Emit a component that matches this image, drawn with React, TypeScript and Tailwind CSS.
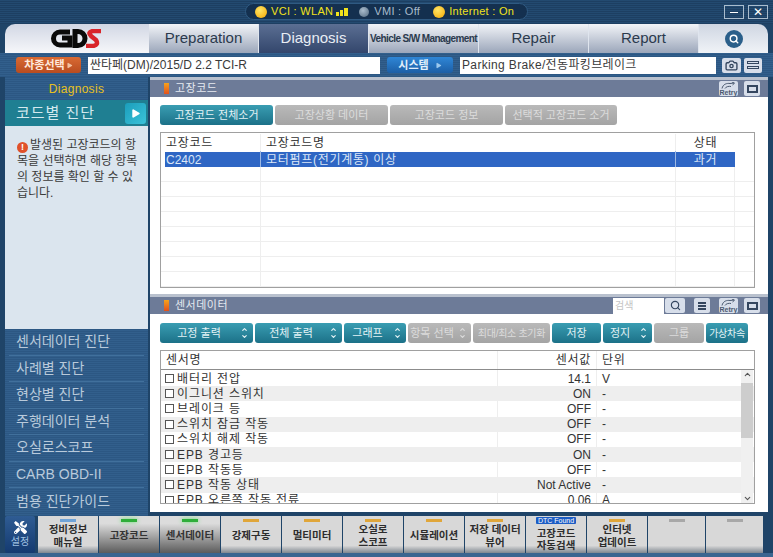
import { Camera, ChevronDown, ChevronUp, Play, Search } from "lucide-react";
import { FaTools } from "react-icons/fa";

const font = "font-['Liberation_Sans','Noto_Sans_CJK_KR',sans-serif]";

const stripes =
  "bg-[repeating-linear-gradient(0deg,#2c5783_0px,#2c5783_1px,#325f8c_1px,#325f8c_2px)]";

const sideItems = [
  "센서데이터 진단",
  "사례별 진단",
  "현상별 진단",
  "주행데이터 분석",
  "오실로스코프",
  "CARB OBD-II",
  "범용 진단가이드",
];

const sensors = [
  ["배터리 전압", "14.1", "V"],
  ["이그니션 스위치", "ON", "-"],
  ["브레이크 등", "OFF", "-"],
  ["스위치 잠금 작동", "OFF", "-"],
  ["스위치 해제 작동", "OFF", "-"],
  ["EPB 경고등", "ON", "-"],
  ["EPB 작동등", "OFF", "-"],
  ["EPB 작동 상태", "Not Active", "-"],
  ["EPB 오른쪽 작동 전류", "0.06", "A"],
];

const tools = [
  { top: ["정비정보", "매뉴얼"], led: "blue" },
  { top: ["고장코드"], led: "green" },
  { top: ["센서데이터"], led: "green" },
  { top: ["강제구동"], led: "amber" },
  { top: ["멀티미터"], led: "amber" },
  { top: ["오실로", "스코프"], led: "amber" },
  { top: ["시뮬레이션"], led: "amber" },
  { top: ["저장 데이터", "뷰어"], led: "amber" },
  { top: ["고장코드", "자동검색"], led: "dtc" },
  { top: ["인터넷", "업데이트"], led: "amber" },
  { top: [], led: "off" },
  { top: [], led: "off" },
];

function Lamp({ on }: { on: boolean }) {
  return (
    <span
      className={
        on
          ? "h-[12px] w-[12px] shrink-0 rounded-full bg-[radial-gradient(circle_at_40%_35%,#ffe566,#f5a800)]"
          : "h-[10px] w-[10px] shrink-0 rounded-full bg-[radial-gradient(circle_at_40%_35%,#a9bccd,#51697f)]"
      }
    />
  );
}

function Tab({ label, active }: { label: string; active?: boolean }) {
  return (
    <div
      className={
        active
          ? "flex h-full w-[110px] items-center justify-center border-r border-[#dfe5ee] bg-[linear-gradient(#5b6f93,#33466c)] text-[15px] text-[#e8edf4]"
          : "flex h-full w-[110px] items-center justify-center border-r border-[#dfe5ee] bg-[linear-gradient(#f2f4f8,#9ba6ba)] text-[15px] text-[#2b3a4d]"
      }
    >
      {label}
    </div>
  );
}

function RetryIcon() {
  return (
    <div className="flex h-[15px] w-[19px] flex-col items-center justify-end rounded-[2px] bg-[#d7deea] text-[#4b5a70]">
      <svg width="15" height="7" viewBox="0 0 15 7" fill="none" stroke="currentColor" strokeWidth="1">
        <path d="M1 6.5 C2 2 6 1 9 1.5 L13 1 M11 0 L13.5 1.2 L11.5 3 M4 6.5 C5 4.5 8 4 10 4.5" />
      </svg>
      <span className="text-[7px] leading-[7px] font-bold">Retry</span>
    </div>
  );
}

function WinIcon() {
  return (
    <div className="flex h-[15px] w-[16px] items-center justify-center rounded-[2px] bg-[#d7deea]">
      <div className="h-[8px] w-[11px] border-2 border-[#34465f]" />
    </div>
  );
}

function PanelHeader({ title, children }: { title: string; children?: React.ReactNode }) {
  return (
    <div className="flex h-[20px] shrink-0 items-center border-t-[3px] border-[#b9c1ce] bg-[#6d7b98] pr-[8px] pl-[14px]">
      <span className="h-[11px] w-[5px] bg-[linear-gradient(#f5a31b,#e2501c)]" />
      <span className="ml-[6px] text-[11px] tracking-[0.5px] text-[#e6eaf1]">{title}</span>
      <div className="ml-auto flex items-center">{children}</div>
    </div>
  );
}

function Btn({ label, w, on, arrows, small }: { label: string; w: string; on?: boolean; arrows?: boolean; small?: boolean }) {
  return (
    <div
      className={`${w} flex h-[20px] shrink-0 items-center justify-center gap-[3px] rounded-[3px] ${small ? "text-[10px] tracking-[-0.3px]" : "text-[11px]"} ${
        on
          ? "bg-[linear-gradient(#3a9db2,#1c7188)] text-[#e4f3f6]"
          : "bg-[linear-gradient(#b9b9b9,#a4a4a4)] text-[#dcdcdc]"
      }`}
    >
      <span className={`whitespace-nowrap ${arrows ? "flex-1 text-center" : ""}`}>{label}</span>
      {arrows && (
        <span className="mr-[5px] flex flex-col">
          <ChevronUp size={7} strokeWidth={4} />
          <ChevronDown size={7} strokeWidth={4} />
        </span>
      )}
    </div>
  );
}

export default function App() {
  return (
    <div className={`${font} flex h-[557px] w-[773px] flex-col overflow-hidden bg-[#1f4468]`}>
      {/* title bar */}
      <div className="relative flex h-[24px] shrink-0 items-center justify-end bg-[repeating-linear-gradient(0deg,#1d3f62_0px,#1d3f62_1px,#234a70_1px,#234a70_2px)] pr-[5px]">
        <div className="absolute top-[3px] left-[245px] flex h-[17px] w-[283px] items-center rounded-full border border-[#2f5a82] bg-[#14304f] pl-[9px] text-[11px] tracking-[0.3px]">
          <Lamp on />
          <span className="ml-[4px] text-[#f2e21c]">VCI : WLAN</span>
          <span className="ml-[3px] flex items-end gap-[1px]">
            <span className="h-[4px] w-[3px] bg-[#f2e21c]" />
            <span className="h-[6px] w-[3px] bg-[#f2e21c]" />
            <span className="h-[8px] w-[4px] bg-[#f2e21c]" />
          </span>
          <span className="ml-[11px] flex"><Lamp on={false} /></span>
          <span className="ml-[5px] text-[#a9bccd]">VMI : Off</span>
          <span className="ml-[13px] flex"><Lamp on /></span>
          <span className="ml-[4px] text-[#f2e21c]">Internet : On</span>
        </div>
        <div className="flex gap-[4px]">
          <div className="flex h-[14px] w-[20px] items-center justify-center border border-[#a9bccd]">
            <span className="h-[1px] w-[8px] bg-white" />
          </div>
          <div className="flex h-[14px] w-[20px] items-center justify-center border border-[#a9bccd] text-[12px] leading-none text-white">
            ✕
          </div>
        </div>
      </div>

      {/* nav */}
      <div className="flex h-[29px] shrink-0 px-[5px]">
        <div className="flex w-[144px] items-center justify-center rounded-tl-[10px] bg-[linear-gradient(#d2d7e4,#f6f7fa)] pr-[2px]">
          <svg width="52" height="19" viewBox="0 0 52 19" fill="none">
            <path d="M20 3 H10 a6.5 6.5 0 0 0 0 13 H20 V9 H12" stroke="#0a0a0a" strokeWidth="5" />
            <path d="M25 2.5 V16.5 H28 a7 7 0 0 0 7 -7 a7 7 0 0 0 -7 -7 Z" stroke="#0a0a0a" strokeWidth="5" />
            <path d="M51 2 H43 Q37 3 41 7 L46 11 Q49 16 43 17 H36" stroke="#d9252a" strokeWidth="4.5" />
          </svg>
        </div>
        <Tab label="Preparation" />
        <Tab label="Diagnosis" active />
        <div className="flex h-full w-[110px] items-center justify-center overflow-hidden border-r border-[#dfe5ee] bg-[linear-gradient(#f2f4f8,#9ba6ba)] text-[10px] font-bold tracking-[-0.6px] whitespace-nowrap text-[#2b3a4d]">
          Vehicle S/W Management
        </div>
        <Tab label="Repair" />
        <Tab label="Report" />
        <div className="flex flex-1 items-center justify-center rounded-tr-[10px] bg-[linear-gradient(#cfd6e2,#f0f3f7)]">
          <div className="flex h-[18px] w-[18px] items-center justify-center rounded-full bg-[#2a5f8a]">
            <Search size={10} strokeWidth={3.5} className="text-white" />
          </div>
        </div>
      </div>

      {/* vehicle / system bar */}
      <div className={`${stripes} flex h-[24px] shrink-0 items-center pl-[16px]`}>
        <div className="flex h-[16px] w-[65px] items-center justify-center gap-[1px] rounded-[3px] bg-[linear-gradient(#d96a33,#b84c20)] text-[11px] font-bold text-[#ffe9dc]">
          차종선택
          <Play size={7} fill="#f3c19f" strokeWidth={0} />
        </div>
        <div className="ml-[7px] flex h-[17px] w-[292px] items-center bg-white pl-[2px] text-[12px] text-[#3a3a3a]">
          싼타페(DM)/2015/D 2.2 TCI-R
        </div>
        <div className="ml-[7px] flex h-[16px] w-[66px] items-center justify-center gap-[6px] rounded-[3px] bg-[linear-gradient(#2f86d6,#1c5ea6)] text-[11px] font-bold text-[#e3f0fb]">
          시스템
          <Play size={7} fill="#9cc9ee" strokeWidth={0} />
        </div>
        <div className="ml-[7px] flex h-[17px] w-[256px] items-center bg-white pl-[2px] text-[12px] tracking-[0.35px] text-[#3a3a3a]">
          Parking Brake/전동파킹브레이크
        </div>
        <div className="ml-[6px] flex h-[15px] w-[19px] items-center justify-center rounded-[2px] bg-[#d7deea]">
          <Camera size={13} strokeWidth={2.5} className="text-[#34465f]" />
        </div>
        <div className="ml-[3px] flex h-[15px] w-[18px] flex-col justify-center gap-[2px] rounded-[2px] bg-[#d7deea] px-[3px]">
          <span className="h-[3px] border border-[#34465f]" />
          <span className="h-[3px] border border-[#34465f]" />
        </div>
      </div>

      {/* main */}
      <div className="flex h-[439px] shrink-0 gap-[2px] px-[5px]">
        {/* sidebar */}
        <div className="flex w-[143px] shrink-0 flex-col">
          <div className={`${stripes} flex h-[23px] shrink-0 items-center justify-center text-[12px] tracking-[0.3px] text-[#e9c21f]`}>
            Diagnosis
          </div>
          <div className="flex h-[26px] shrink-0 items-center justify-between bg-[#1f7f92] pr-[2px] pl-[11px] text-[15px] tracking-[1px] text-[#d3e9ee]">
            코드별 진단
            <div className="flex h-[21px] w-[21px] items-center justify-center rounded-[3px] bg-[linear-gradient(135deg,#1b9dbb,#3bc3da)]">
              <Play size={11} fill="white" strokeWidth={0} />
            </div>
          </div>
          <div className="h-[203px] shrink-0 bg-[#dbe5ee] pt-[11px] pr-[8px] pl-[12px] text-[12px] leading-[16px] text-[#3a3a3a]">
            <span className="mr-[2px] inline-flex h-[11px] w-[11px] items-center justify-center rounded-full bg-[#e0512a] align-[-1px] text-[9px] leading-none font-bold text-white">
              !
            </span>
            발생된 고장코드의 항목을 선택하면 해당 항목의 정보를 확인 할 수 있습니다.
          </div>
          <div className={`${stripes} flex-1`}>
            {sideItems.map((s) => (
              <div
                key={s}
                className="mx-[4px] flex h-[26.5px] items-center border-b border-[#41709c] pl-[7px] text-[14px] text-[#b9cadb] last:border-b-0"
              >
                {s}
              </div>
            ))}
          </div>
        </div>

        {/* right side */}
        <div className="flex w-[618px] flex-col">
          {/* fault codes */}
          <div className="flex h-[216px] shrink-0 flex-col bg-white">
            <PanelHeader title="고장코드">
              <RetryIcon />
              <span className="ml-[6px]"><WinIcon /></span>
            </PanelHeader>
            <div className="flex gap-[2px] pt-[8px] pl-[10px]">
              <Btn label="고장코드 전체소거" w="w-[113px]" on />
              <Btn label="고장상황 데이터" w="w-[113px]" />
              <Btn label="고장코드 정보" w="w-[113px]" />
              <Btn label="선택적 고장코드 소거" w="w-[112px]" />
            </div>
            <div className="mt-[7px] ml-[10px] h-[156px] w-[595px] overflow-hidden border border-[#a0a0a0] text-[12px] tracking-[0.7px] text-[#333]">
              <div className="flex h-[19px] items-center">
                <span className="w-[99px] pl-[5px]">고장코드</span>
                <span className="w-[415px] border-l border-[#eee] pl-[5px]">고장코드명</span>
                <span className="w-[60px] border-l border-[#eee] text-center">상태</span>
              </div>
              <div className="ml-[4px] flex h-[15px] w-[570px] items-center bg-[#2f66c4] text-[#dce7f7]">
                <span className="w-[95px] pl-[1px] tracking-normal">C2402</span>
                <span className="w-[415px] border-l border-[#9db8e2] pl-[5px]">모터펌프(전기계통) 이상</span>
                <span className="w-[60px] border-l border-[#9db8e2] text-center">과거</span>
              </div>
              {[0, 1, 2, 3, 4, 5, 6, 7].map((i) => (
                <div key={i} className="flex h-[15px] border-b border-[#eee]">
                  <span className="w-[99px]" />
                  <span className="w-[415px] border-l border-[#eee]" />
                  <span className="w-[60px] border-x border-[#eee]" />
                </div>
              ))}
            </div>
          </div>

          <div className="h-px shrink-0 bg-white" />

          {/* sensor data */}
          <div className="flex h-[218px] shrink-0 flex-col bg-white">
            <PanelHeader title="센서데이터">
              <div className="flex h-[16px] w-[51px] items-center bg-white pl-[2px] text-[10px] text-[#c4c4c4]">검색</div>
              <div className="ml-[1px] flex h-[15px] w-[20px] items-center justify-center rounded-[2px] bg-[#d7deea]">
                <Search size={11} strokeWidth={2.5} className="text-[#34465f]" />
              </div>
              <div className="ml-[9px] flex h-[15px] w-[16px] flex-col justify-center gap-[1px] rounded-[2px] bg-[#d7deea] px-[4px]">
                <span className="h-[2px] bg-[#34465f]" />
                <span className="h-[2px] bg-[#34465f]" />
                <span className="h-[2px] bg-[#34465f]" />
              </div>
              <span className="ml-[9px]"><RetryIcon /></span>
              <span className="ml-[6px]"><WinIcon /></span>
            </PanelHeader>
            <div className="flex gap-[2px] pt-[9px] pl-[10px]">
              <Btn label="고정 출력" w="w-[93px]" on arrows />
              <Btn label="전체 출력" w="w-[87px]" on arrows />
              <Btn label="그래프" w="w-[62px]" on arrows />
              <Btn label="항목 선택" w="w-[63px]" arrows />
              <Btn label="최대/최소 초기화" w="w-[77px]" small />
              <Btn label="저장" w="w-[49px]" on />
              <Btn label="정지" w="w-[49px]" on arrows />
              <Btn label="그룹" w="w-[50px]" />
              <Btn label="가상차속" w="w-[42px]" on small />
            </div>
            <div className="mt-[7px] ml-[10px] flex h-[154px] w-[595px] flex-col overflow-hidden border border-[#a0a0a0] text-[12px] text-[#333]">
              <div className="flex h-[19px] shrink-0 items-center border-b border-[#8c8c8c] tracking-[0.7px]">
                <span className="w-[336px] pl-[5px]">센서명</span>
                <span className="w-[99px] border-l border-[#eee] pr-[5px] text-right">센서값</span>
                <span className="w-[136px] border-l border-[#eee] pl-[5px]">단위</span>
              </div>
              <div className="relative flex-1 overflow-hidden pt-px">
                {sensors.map(([name, val, unit], i) => (
                  <div
                    key={name}
                    className={`flex h-[15.2px] items-center whitespace-nowrap ${i % 2 === 1 ? "bg-[#eeeeee]" : "bg-white"}`}
                  >
                    <span className="flex w-[336px] items-center pl-[4px] tracking-[0.9px]">
                      <span className="mr-[3px] h-[9px] w-[9px] border border-[#555] bg-white" />
                      {name}
                    </span>
                    <span className="w-[99px] border-l border-[#eee] pr-[5px] text-right">{val}</span>
                    <span className="w-[136px] border-l border-[#eee] pl-[5px]">{unit}</span>
                  </div>
                ))}
                <div className="absolute top-0 right-[1px] bottom-0 flex w-[12px] flex-col items-center justify-between bg-[#f0f0f0]">
                  <ChevronUp size={9} strokeWidth={3} className="text-[#555]" />
                  <div className="absolute top-[13px] h-[55px] w-full bg-[#cdcdcd]" />
                  <ChevronDown size={9} strokeWidth={3} className="text-[#555]" />
                </div>
              </div>
            </div>
          </div>
        </div>
      </div>

      {/* tools */}
      <div className="flex h-[37px] shrink-0 gap-[1px] px-[5px]">
        <div className="mr-[2px] flex w-[30px] shrink-0 flex-col items-center justify-center rounded-[2px] bg-[linear-gradient(#2f5c93,#143a70)] text-[10px] text-[#9fc0e2]">
          <FaTools size={13} className="text-white" />
          <span className="mt-[1px] leading-[13px]">설정</span>
        </div>
        {tools.map((t, i) => (
          <div
            key={i}
            className={`relative flex shrink-0 flex-col items-center justify-center text-[10.5px] font-bold ${
              t.led === "dtc" ? "pt-[9px] leading-[12px]" : "pt-[2px] leading-[12.5px]"
            } ${
              t.led === "green"
                ? "bg-[linear-gradient(#dcdcdc_20%,#5c5c5c)] text-[#333]"
                : "bg-[linear-gradient(#d8d8d8_80%,#7f8790)] text-[#2d2d2d]"
            } ${i >= 10 ? "w-[57px]" : "w-[60px]"}`}
          >
            {t.led === "dtc" ? (
              <span className="absolute top-[1px] rounded-[1px] bg-[#1c5cc4] px-[2px] text-[7px] leading-[7px] font-normal text-white">
                DTC Found
              </span>
            ) : (
              <span
                className={`absolute top-[3px] h-[3px] w-[16px] ${
                  t.led === "green"
                    ? "bg-[#2fae3a] shadow-[0_0_4px_#5fe06a]"
                    : t.led === "amber"
                      ? "bg-[#e0a63a]"
                      : t.led === "blue"
                        ? "bg-[#6fa3d8]"
                        : "bg-[#a8a8a8]"
                }`}
              />
            )}
            {t.top.map((line) => (
              <span key={line} className="whitespace-nowrap">{line}</span>
            ))}
          </div>
        ))}
      </div>
      <div className="flex-1 bg-[#3a6590]" />
    </div>
  );
}
